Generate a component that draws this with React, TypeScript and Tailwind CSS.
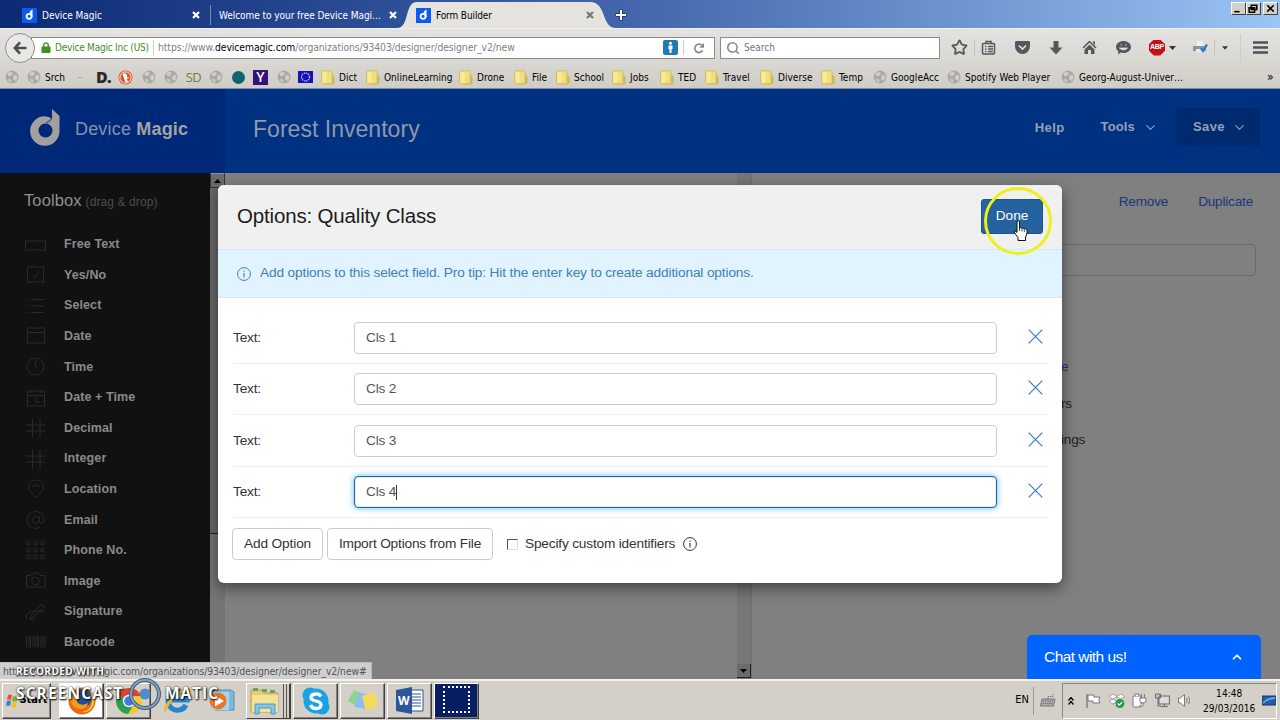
import type { ReactNode } from "react";
import { ChevronDown, ChevronUp, Search, Star } from "lucide-react";

const bookmarks = [
  { icon: "globe", label: "", w: "w-[22px]" },
  { icon: "globe", label: "Srch", w: "w-[47px]" },
  { icon: "dash", label: "", w: "w-[23px]" },
  { icon: "d", label: "", w: "w-[22px]" },
  { icon: "duck", label: "", w: "w-[23px]" },
  { icon: "globe", label: "", w: "w-[22px]" },
  { icon: "globe", label: "", w: "w-[23px]" },
  { icon: "sd", label: "", w: "w-[22px]" },
  { icon: "globe", label: "", w: "w-[23px]" },
  { icon: "teal", label: "", w: "w-[22px]" },
  { icon: "y", label: "", w: "w-[23px]" },
  { icon: "globe", label: "", w: "w-[22px]" },
  { icon: "eu", label: "", w: "w-[22px]" },
  { icon: "folder", label: "Dict", w: "w-[45px]" },
  { icon: "folder", label: "OnlineLearning", w: "w-[93px]" },
  { icon: "folder", label: "Drone", w: "w-[55px]" },
  { icon: "folder", label: "File", w: "w-[42px]" },
  { icon: "folder", label: "School", w: "w-[56px]" },
  { icon: "folder", label: "Jobs", w: "w-[48px]" },
  { icon: "folder", label: "TED", w: "w-[45px]" },
  { icon: "folder", label: "Travel", w: "w-[55px]" },
  { icon: "folder", label: "Diverse", w: "w-[61px]" },
  { icon: "folder", label: "Temp", w: "w-[52px]" },
  { icon: "globe", label: "GoogleAcc", w: "w-[74px]" },
  { icon: "globe", label: "Spotify Web Player", w: "w-[114px]" },
  { icon: "globe", label: "Georg-August-Univer…", w: "w-[203px]" },
];

const tools = [
  "Free Text", "Yes/No", "Select", "Date", "Time", "Date + Time", "Decimal",
  "Integer", "Location", "Email", "Phone No.", "Image", "Signature", "Barcode",
];

const options = ["Cls 1", "Cls 2", "Cls 3", "Cls 4"];

function Favicon() {
  return (
    <svg className="size-[15px] shrink-0" viewBox="0 0 15 15">
      <rect width="15" height="15" fill="#0a5cf0" />
      <circle cx="7.1" cy="8.3" r="2.5" fill="none" stroke="#fff" strokeWidth="1.8" />
      <path d="M9.7 9V3L8 4.6" fill="none" stroke="#fff" strokeWidth="1.6" />
    </svg>
  );
}

function BookmarkIcon({ name }: { name: string }) {
  switch (name) {
    case "globe":
      return (
        <svg className="size-[14px]" viewBox="0 0 14 14">
          <circle cx="7" cy="7" r="6.4" fill="#a9a8a5" />
          <path d="M2 3.5 5 1.5 8 3 6.5 5.5 4 6.5ZM8.5 5.5l3-1 1 3.5-2 3-2.5-2ZM3 8.5l3 1 .5 3.5L3.5 11Z" fill="#cfcdc9" />
        </svg>
      );
    case "folder":
      return (
        <svg className="size-[15px]" viewBox="0 0 15 15">
          <path d="M11 5.5l2.3.6c.6.2.7.7.7 1.2v5.2c0 .8-.6 1.3-1.3 1.3H6Z" fill="#d9c45a" stroke="#b9a03e" strokeWidth=".6" />
          <path d="M1.5 1.8c0-.6.3-1 .9-1H11c.6 0 1 .4 1 1v11c0 .6-.4 1-1 1H2.4c-.6 0-.9-.4-.9-1Z" fill="#f0e07c" stroke="#c8b257" strokeWidth=".7" />
          <path d="M2.6 2h4v11h-4Z" fill="#faf0a4" opacity=".7" />
        </svg>
      );
    case "dash":
      return <span className="h-px w-[5px] bg-[#c9a08c]" />;
    case "d":
      return <span className="font-['Open_Sans'] text-[16px] leading-none font-extrabold tracking-[-0.7px] text-[#2b2b2b] [font-stretch:normal]">D.</span>;
    case "duck":
      return (
        <svg className="size-[15px] shrink-0" viewBox="0 0 15 15">
          <circle cx="7.5" cy="7.5" r="7" fill="#d9562e" />
          <circle cx="7.5" cy="7.5" r="5.6" fill="none" stroke="#fff" strokeWidth=".9" />
          <path d="M4.5 4c2-1.5 4.5-.5 4.6 2L9 7l2 .8-2.2.9 1.2 3.5H7.5L5.5 7Z" fill="#fff" />
          <path d="M8.7 7.3l3.3.4-2.8 1.4Z" fill="#f5b82e" />
        </svg>
      );
    case "sd":
      return <span className="font-['Open_Sans'] text-[13px] leading-none font-medium tracking-[-0.5px] text-[#747e3c] [font-stretch:normal]">SD</span>;
    case "teal":
      return <span className="size-[13px] shrink-0 rounded-full bg-[#0e6470]" />;
    case "y":
      return <span className="flex size-[15px] items-center justify-center bg-[#38107c] font-['Open_Sans'] text-[14px] leading-none font-semibold text-white [font-stretch:normal]">Y</span>;
    default:
      return (
        <svg className="h-[12px] w-[15px]" viewBox="0 0 15 12">
          <rect width="15" height="12" fill="#1212c4" />
          <circle cx="7.5" cy="6" r="4" fill="none" stroke="#c8cfa0" strokeWidth="1.3" strokeDasharray="1.3 .8" />
        </svg>
      );
  }
}

function ToolIcon({ name }: { name: string }) {
  const shapes: Record<string, ReactNode> = {
    "Free Text": <rect x=".5" y="6.5" width="20" height="9" />,
    "Yes/No": <><rect x="2.5" y="2.5" width="16" height="15" /><path d="m7 11 2.5 2.5L15 6" /></>,
    Select: <path d="M2 4h1.5M6 4h13M2 10.5h1.5M6 10.5h13M2 17h1.5M6 17h13" />,
    Date: <><rect x="2.5" y="2.5" width="17" height="15" /><path d="M2.5 7h17" /></>,
    Time: <><circle cx="10.5" cy="10" r="8.5" /><path d="M10.5 4.5V10l3 2" /></>,
    "Date + Time": <><rect x="2.5" y="3.5" width="17" height="15" /><path d="M2.5 8h17M6 3v3M15.5 3v3M11 10.5v4h4" /></>,
    Decimal: <path d="M7.5 1v19M15 1v19M1 7.5h19M1 13.5h19" />,
    Integer: <path d="M7.5 1v19M15 1v19M1 7.5h19M1 13.5h19" />,
    Location: <path d="M11 18.5C7 15 3.5 12 3.5 8.5a7.5 7 0 0 1 15 0C18.5 12 15 15 11 18.5ZM7 8.5q4-4 8 0" />,
    Email: <><circle cx="11" cy="10.5" r="3.5" /><path d="M14.5 7v4.5c0 3 4.5 3 4.5-1a8.500 8.500 0 1 0-4 7.2" /></>,
    "Phone No.": <>{[3.5, 10.5, 17.5].map((y) => [3.5, 10.5, 17.5].map((x) => <circle key={x + "-" + y} cx={x} cy={y} r="1.9" />))}</>,
    Image: <><path d="M1.5 5H6l2-2.5h5.5L15 5h5v11.5H1.5Z" /><circle cx="10.5" cy="10.5" r="3.8" /></>,
    Signature: <><path d="m6 14 10.500-11 3 2.500L9 15.500l-4 1.500ZM2 18c-3-5 3-9 9-8M5 18q3 1 5-2M12 9.500h8" /></>,
    Barcode: <path d="M1.5 4v12M4 4v12M5.5 4v12M8 4v12M10 4v12M12 4v12M13.5 4v12M16 4v12M18 4v12M20 4v12" />,
  };
  return (
    <svg className="size-[22px]" viewBox="0 0 22 21" fill="none" stroke="#2a2a2a" strokeWidth="1">
      {shapes[name]}
    </svg>
  );
}

function InfoIcon({ className }: { className: string }) {
  return (
    <svg className={className} viewBox="0 0 14 14" fill="none" stroke="currentColor">
      <circle cx="7" cy="7" r="6.4" strokeWidth="1" />
      <path d="M7 6v4.5M7 3.5v1.2" strokeWidth="1.1" />
    </svg>
  );
}

function TabX({ color }: { color: string }) {
  return (
    <svg className="size-2" viewBox="0 0 8 8" stroke={color} strokeWidth="2.2"><path d="m1 1 6 6M7 1 1 7" /></svg>
  );
}

function BrowserChrome() {
  return (
    <div className="h-[89px] font-['DejaVu_Sans_Condensed','DejaVu_Sans',sans-serif] text-[10px] [font-stretch:semi-condensed]">
      <div className="relative flex h-7 bg-linear-to-r from-[#0c2a74] via-[#4467ad] to-[#9cc4f4] text-white">
        <div className="flex w-[210px] items-center pt-0.5 pl-[22px]">
          <Favicon />
          <span className="ml-[5px] w-[150px] tracking-[-0.02px]">Device Magic</span>
          <TabX color="#fff" />
        </div>
        <div className="flex w-[192px] items-center pt-0.5">
          <span className="h-5 w-px bg-white/40" />
          <span className="ml-2 w-[170px] whitespace-nowrap tracking-[-0.05px]">Welcome to your free Device Magi…</span>
          <TabX color="#fff" />
        </div>
        <div className="relative flex w-[212px] items-center pt-0.5 pl-[14px] text-black">
          <svg className="absolute top-0 left-[-7px] h-7 w-[226px]" viewBox="0 0 226 28">
            <path d="M2 28C15 28 9 2 22 2H195C212 2 206 28 221 28Z" fill="#e4e3e0" />
          </svg>
          <span className="relative flex items-center">
            <Favicon />
            <span className="ml-[5px] w-[150px] whitespace-nowrap tracking-[-0.12px]">Form Builder</span>
            <TabX color="#777" />
          </span>
        </div>
        <svg className="relative mt-[9px] ml-px size-3" viewBox="0 0 12 12">
          <path d="M6 .5v11M.5 6h11" stroke="#1c356f" strokeWidth="3.6" />
          <path d="M6 1v10M1 6h10" stroke="#fff" strokeWidth="2" />
        </svg>
        <div className="mt-[2px] mr-[2px] ml-auto flex h-3">
          {["M2 8h5", "M4 2h5v4H4ZM2 4.5h5v4H2Z", "m3 2 6 6M9 2 3 8"].map((d, i) => (
            <span key={d} className={`h-[13px] w-[15px] border border-t-white border-l-white border-r-[#404040] border-b-[#404040] bg-[#d4d0c8] ${i === 2 ? "ml-[2px]" : ""}`}>
              <svg viewBox="0 0 12 10" fill="none" stroke="#000" strokeWidth="1.4"><path d={d} /></svg>
            </span>
          ))}
        </div>
      </div>

      <div className="h-[60px] border-t border-[#f0efec] bg-linear-to-b from-[#e4e3e0] to-[#d0cdc6]">
        <div className="flex h-[37px] items-center">
          <div className="z-10 ml-[5px] flex size-[30px] shrink-0 items-center justify-center rounded-full border border-[#909090] bg-[#e9e8e5]">
            <svg className="size-[14px]" viewBox="0 0 15 15" fill="none" stroke="#494e57" strokeWidth="2.8"><path d="M7.5 1.5 2 7.5l5.5 6M2.5 7.5h12" /></svg>
          </div>
          <div className="-ml-1 flex h-[22px] w-[684px] shrink-0 items-center border border-[#8c8c8c] bg-white">
            <svg className="ml-[9px] h-[11px] w-[10px] shrink-0" viewBox="0 0 10 12"><path d="M2.5 6V3.5a2.5 2.5 0 0 1 5 0V6" fill="none" stroke="#429121" strokeWidth="1.5" /><rect y="5" width="10" height="7" rx="1" fill="#429121" /></svg>
            <span className="ml-[4px] w-[94px] shrink-0 whitespace-nowrap tracking-[-0.22px] text-[#429121]">Device Magic Inc (US)</span>
            <span className="mr-[4px] ml-[4px] h-[15px] w-px bg-[#d0d0d0]" />
            <span className="w-[505px] shrink-0 whitespace-nowrap text-[10.3px] tracking-[-0.08px] text-[#808080]">https://www.<span className="text-black">devicemagic.com</span>/organizations/93403/designer/designer_v2/new</span>
            <svg className="size-[15px] shrink-0" viewBox="0 0 15 15"><rect width="15" height="15" rx="2" fill="#2479b5" /><circle cx="7.5" cy="3.3" r="1.5" fill="#fff" /><path d="M5.5 5.5h4V9h-1v4h-2V9h-1Z" fill="#fff" /></svg>
            <span className="ml-[5px] h-[15px] w-px bg-[#ccc]" />
            <svg className="ml-[9px] size-3" viewBox="0 0 12 12"><path d="M9.6 8.5a4.2 4.2 0 1 1-.5-5" fill="none" stroke="#8a8a8a" strokeWidth="1.7" /><path d="M11 .8v5H6.3Z" fill="#8a8a8a" /></svg>
          </div>
          <div className="ml-[5px] flex h-[22px] w-[220px] shrink-0 items-center border border-[#8c8c8c] bg-white pl-[5px]">
            <Search className="size-[14px] text-[#888]" strokeWidth={2.6} />
            <span className="ml-[4px] text-[#757575]">Search</span>
          </div>
          <Star className="ml-[11px] size-[17px] text-[#53575e]" strokeWidth={2.5} />
          <span className="ml-[6px] h-4 w-px bg-[#c6c4bf]" />
          <svg className="ml-[6px] size-[15px]" viewBox="0 0 15 15" fill="none" stroke="#53575e" strokeWidth="1.5"><rect x="1.5" y="3.5" width="12" height="10.5" rx="1" /><path d="M5 3V1.5h5V3M4 6.5h1.5M7 6.5h5M4 9h1.5M7 9h5M4 11.5h1.5M7 11.5h5" /></svg>
          <svg className="ml-[19px] h-[13px] w-[15px]" viewBox="0 0 15 13"><path d="M0 1.5C0 .5.5 0 1.5 0h12c1 0 1.5.5 1.5 1.5V5.500a7.500 7.500 0 0 1-15 0Z" fill="#53575e" /><path d="m4 4.5 3.5 3.5L11 4.5" fill="none" stroke="#e2e1de" strokeWidth="1.7" /></svg>
          <svg className="ml-[19px] size-[14px]" viewBox="0 0 14 14"><path d="M4.5 0h5v6.5h4L7 13.5.5 6.5h4Z" fill="#53575e" /></svg>
          <svg className="ml-[19px] size-[15px]" viewBox="0 0 15 15"><path d="M7.5 1.5 1 8M7.5 1.5 14 8" stroke="#53575e" strokeWidth="1.6" /><path d="M7.5 4.5 12.5 9.5V14H9V10H6v4H2.5V9.5ZM11 1.5h2V5l-2-2Z" fill="#53575e" /></svg>
          <svg className="ml-[19px] size-[15px]" viewBox="0 0 15 15"><path d="M7.5 1C11.5 1 15 3.5 15 7s-3.5 6-7.5 6c-1 0-2-.1-2.8-.4L2 14.5l.3-3.2C1 10.2 0 8.7 0 7c0-3.5 3.5-6 7.5-6Z" fill="#53575e" /><path d="M4.5 5h1.5M9 5h1.5M3.5 8h8q-4 4-8 0Z" stroke="#e2e1de" fill="#e2e1de" strokeWidth=".8" /></svg>
          <span className="ml-[18px] flex size-4 items-center justify-center bg-[#c90d12] font-['Liberation_Sans'] text-[7px] font-bold tracking-[-0.2px] text-white [clip-path:polygon(30%_0,70%_0,100%_30%,100%_70%,70%_100%,30%_100%,0_70%,0_30%)]">ABP</span>
          <svg className="ml-[4px] h-1 w-[7px]" viewBox="0 0 7 4"><path d="M0 0h7L3.5 4Z" fill="#333" /></svg>
          <svg className="ml-[17px] size-[15px]" viewBox="0 0 15 15"><path d="M4 1h6v5H4Z" fill="#eef2f5" /><path d="M0 6h13v5H0Z" fill="#8d949b" /><path d="M3 9h7v4H3Z" fill="#dfe9f0" /><path d="m7 9 3 4 5-8-2-1-3 5-1.5-1.5Z" fill="#2d76c4" /></svg>
          <span className="ml-[6px] h-4 w-px bg-[#c6c4bf]" />
          <svg className="ml-[7px] h-1 w-[6px]" viewBox="0 0 7 4"><path d="M0 0h7L3.5 4Z" fill="#333" /></svg>
          <span className="ml-[12px] h-7 w-px bg-[#cfcdc8]" />
          <svg className="ml-[12px] h-[13px] w-[15px]" viewBox="0 0 15 13" stroke="#4d5158" strokeWidth="2.6"><path d="M0 1.5h15M0 6.5h15M0 11.5h15" /></svg>
        </div>
        <div className="flex h-[22px] items-center pl-[4px]">
          {bookmarks.map((b, i) => (
            <div key={i} className={`flex shrink-0 items-center ${b.w}`}>
              <span className="flex w-[15px] shrink-0 items-center justify-center"><BookmarkIcon name={b.icon} /></span>
              <span className="ml-[4px] whitespace-nowrap tracking-[0.04px]">{b.label}</span>
            </div>
          ))}
          <span className="ml-[4px] text-xs leading-none">»</span>
        </div>
      </div>
      <div className="h-px bg-[#7f8fa8]" />
    </div>
  );
}

function Designer() {
  return (
    <div className="flex h-[590px] flex-col bg-[#808080]">
      <header className="flex h-[84px] shrink-0 bg-[#003080]">
        <div className="flex w-[225px] items-center bg-[#002878] pb-[8px] pl-[30px] text-[#a3a3a3]">
          <svg className="h-[37px] w-[30px]" viewBox="0 0 30 37">
            <path fillRule="evenodd" d="M22 0 29.5 7V22A14.700 14.700 0 1 1 14.700 7.300Q19 7.500 22 10ZM15.500 14.500a7 7 0 1 0 7 7 7 7 0 0 0-7-7Z" fill="#a0a0a0" />
            <path d="M22 9.5Q19 12.5 16 14.5" fill="none" stroke="#4c5a80" strokeWidth="1.4" />
          </svg>
          <span className="mt-[4px] ml-[15px] font-['Liberation_Sans',sans-serif] text-[18px] tracking-[0.18px] whitespace-nowrap"><span className="text-[#8590ac]">Device </span><b>Magic</b></span>
        </div>
        <h1 className="mt-[26px] ml-7 h-7 text-[23px] leading-7 tracking-[0.03px] text-[#8f99ad]">Forest Inventory</h1>
        <div className="mr-[20px] ml-auto flex items-center pb-[8px] text-[13px] font-bold tracking-[0.4px] text-[#95a0b5]">
          <span className="mr-[36px] pt-[2px]">Help</span>
          <span className="mr-[8px] tracking-[0.15px]">Tools</span>
          <ChevronDown className="size-[15px]" strokeWidth={1.7} />
          <span className="ml-[18px] flex h-[38px] w-[84px] items-center rounded-[3px] bg-[#002a70] pl-[17px]">
            Save
            <ChevronDown className="ml-[7px] size-[15px]" strokeWidth={1.7} />
          </span>
        </div>
      </header>

      <div className="flex min-h-0 grow">
        <aside className="w-[210px] overflow-hidden bg-[#111] text-[#8a8a8a]">
          <h2 className="mt-[16px] mb-[17.4px] ml-6 flex h-[23px] items-center text-[16.5px] tracking-[0.1px] text-[#8f8f8f]">
            Toolbox<span className="ml-[4px] pt-[2px] text-[12px] text-[#4d4d4d]">(drag &amp; drop)</span>
          </h2>
          {tools.map((t) => (
            <div key={t} className="flex h-[30.58px] items-center pl-[25px] text-[12.5px] font-bold tracking-[0.1px]">
              <ToolIcon name={t} />
              <span className="ml-[17px]">{t}</span>
            </div>
          ))}
        </aside>
        <div className="flex w-[15px] flex-col bg-[#747474]">
          <span className="flex h-[15px] items-center justify-center border border-[#333] border-t-[#909090] bg-[#6c6c6c] text-[#111]">
            <svg className="h-1 w-[7px]" viewBox="0 0 7 4"><path d="M0 4h7L3.5 0Z" /></svg>
          </span>
          <span className="h-[346px] border-b border-[#222] bg-[#686868]" />
        </div>
        <div className="w-[512px]" />
        <div className="flex w-[15px] flex-col justify-end border-r border-[#707070] bg-[#767676]">
          <span className="mb-[1px] flex h-[14px] items-center justify-center border-r border-b border-[#222] bg-[#6c6c6c]">
            <svg className="h-1 w-[7px]" viewBox="0 0 7 4"><path d="M0 0h7L3.5 4Z" /></svg>
          </span>
        </div>
        <div className="grow pt-[20px] pr-6 text-[13.6px] tracking-[-0.2px] text-[#212121]">
          <div className="flex justify-end gap-[30px] pr-[3px] leading-[17px] text-[#1b377f]">
            <span>Remove</span><span>Duplicate</span>
          </div>
          <div className="mt-[34px] h-8 rounded border border-[#666b70]" />
          <div className="ml-[309px] leading-[18px]">
            <p className="mt-[82px] text-[#25317b]">e</p>
            <p className="mt-[19px]">rs</p>
            <p className="mt-[18px]">ings</p>
          </div>
        </div>
      </div>
    </div>
  );
}

function OptionsModal() {
  return (
    <div className="absolute top-[185px] left-[218px] h-[398px] w-[844px] overflow-hidden rounded-md bg-white text-[13.7px] tracking-[-0.19px] text-[#333] shadow-[0_5px_15px_rgba(0,0,0,0.5)]">
      <div className="flex h-[64px] items-center justify-between bg-[#f1f0f0] pr-[19px] pb-[2px] pl-[19px]">
        <h3 className="text-[20.5px] tracking-[-0.17px] text-[#1c1c1c]">Options: Quality Class</h3>
        <button className="h-[35px] w-[62px] rounded-[3px] border border-[#1d558c] bg-[#2463a0] tracking-[-0.1px] text-white">Done</button>
      </div>
      <div className="flex h-[49px] items-center border-y border-[#d4e9f6] bg-[#e1f3fe] pl-[19px] text-[13.7px] tracking-[-0.145px] text-[#4280b4]">
        <InfoIcon className="size-[14px]" />
        <span className="ml-[9px]">Add options to this select field. Pro tip: Hit the enter key to create additional options.</span>
      </div>
      <div className="mt-[14px] ml-[15px] w-[815px]">
        {options.map((o, i) => (
          <div key={o} className="flex h-[51.5px] items-center border-b border-[#eee] pt-px">
            <span className="w-[121px] pt-px">Text:</span>
            <div className={i === 3
              ? "flex h-8 w-[643px] items-center rounded border border-[#1f66a0] pt-px pl-[11px] text-[#555] shadow-[0_0_6px_#58b8f5,inset_0_0_1px_#2a70a8]"
              : "flex h-8 w-[643px] items-center rounded border border-[#ccc] pt-px pl-[11px] text-[#555]"}>
              {o}
              {i === 3 && <span className="h-[15px] w-px bg-[#333]" />}
            </div>
            <svg className="mb-[3px] ml-[31px] size-[15px]" viewBox="0 0 15 15" stroke="#3b7bc4" strokeWidth="1.2"><path d="m.7.7 13.6 13.6M14.3.7.7 14.3" /></svg>
          </div>
        ))}
        <div className="mt-[10px] flex items-center">
          <button className="-ml-px h-8 w-[91px] rounded border border-[#ccc] tracking-[-0.13px]">Add Option</button>
          <button className="ml-[4px] h-8 w-[166px] rounded border border-[#ccc]">Import Options from File</button>
          <span className="ml-[14px] size-[11px] border border-t-[#555] border-r-[#ddd] border-b-[#ddd] border-l-[#555]" />
          <span className="ml-[7px]">Specify custom identifiers</span>
          <InfoIcon className="ml-[8px] size-[14px]" />
        </div>
      </div>
    </div>
  );
}

function TaskButton({ className = "", children }: { className?: string; children: ReactNode }) {
  return (
    <span className={`flex h-[36px] w-[45px] shrink-0 items-center justify-center border border-t-white border-l-white border-r-[#404040] border-b-[#404040] shadow-[inset_-1px_-1px_0_#808080] ${className}`}>
      {children}
    </span>
  );
}

function Taskbar() {
  return (
    <div className="flex h-[41px] items-center border-t-2 border-[#f3f2ef] bg-[#d4d0c8] font-['DejaVu_Sans_Condensed','DejaVu_Sans',sans-serif] [font-stretch:semi-condensed]">
      <TaskButton className="ml-[2px] w-[49px]!">
        <svg className="size-[14px] shrink-0" viewBox="0 0 14 14"><path d="M3 1q2-1 4 0L6 6q-2-1-4 0Z" fill="#e4572e" /><path d="M8 2q2 1 5 0l-1 5q-3 1-5 0Z" fill="#7bb32e" /><path d="M2 7q2-1 4 0l-1 5q-2-1-4 0Z" fill="#2f83d6" /><path d="M7 8q2 1 5 0l-1 5q-3 1-5 0Z" fill="#f4bd26" /></svg>
        <b className="text-[11px] text-black">Start</b>
      </TaskButton>
      <TaskButton className="ml-2 bg-white">
        <svg className="size-[30px]" viewBox="0 0 30 30"><circle cx="15" cy="15" r="13.5" fill="#e66a17" /><circle cx="16" cy="12" r="9" fill="#234f91" /><path d="M2 8q3 2 6 1 5 0 5 4-4 0-3 3 4 5 11 1-1 6-8 6Q3 22 2 8Z" fill="#f29b1d" /><path d="M24 5q6 9 1 17-4 5-10 4 9-2 10-10Z" fill="#f7c72c" /></svg>
      </TaskButton>
      <TaskButton className="ml-[2px]">
        <svg className="size-[28px]" viewBox="0 0 28 28"><circle cx="14" cy="14" r="13" fill="#f3c72f" /><path d="M14 14 2.700 7.500A13 13 0 0 1 26 9H14Z" fill="#dd4334" /><path d="M14 14 2.700 7.500A13 13 0 0 0 13 27l6-10Z" fill="#2f9e50" /><circle cx="14" cy="14" r="6.2" fill="#fff" /><circle cx="14" cy="14" r="4.8" fill="#3d7de8" /></svg>
      </TaskButton>
      <svg className="ml-[11px] size-[30px]" viewBox="0 0 30 30"><path d="M24 19a9.500 9.500 0 1 1 1-5H8" fill="none" stroke="#2586cf" strokeWidth="5" /><path d="M3 27C-3 20 22-3 28 3q2 2-2 7 1-5-3-4Q12 8 3 27Z" fill="#f0b92f" /></svg>
      <svg className="ml-[16px] size-[27px]" viewBox="0 0 27 27"><path d="M5 3h18l3 2v18H7Z" fill="#7db9d8" stroke="#4d91b8" /><path d="M3 5h18v18H3Z" fill="#a9d3e8" /><circle cx="10" cy="14" r="8.5" fill="#ea7624" /><path d="m7 8.5 9 5.5-9 5.5Z" fill="#fff" /></svg>
      <TaskButton className="ml-[11px] border-r-2! shadow-[inset_-2px_0_0_#d4d0c8,inset_-3px_0_0_#555,inset_-5px_0_0_#d4d0c8,inset_-6px_0_0_#555]!">
        <svg className="mr-[6px] size-[30px]" viewBox="0 0 30 30"><path d="M1 4h11l2 3h14v19H1Z" fill="#eacb6a" stroke="#c3a14a" /><path d="M3 2h5v3H3ZM12 3h5v3h-5ZM20 4h5v3h-5Z" fill="#64a565" /><path d="M2 9h26v17H2Z" fill="#f6e39b" /><path d="M5 28V18h20v10h-4v-6H9v6Z" fill="#83c6e6" stroke="#4d9ac0" /></svg>
      </TaskButton>
      <TaskButton className="ml-[2px]">
        <svg className="size-[30px]" viewBox="0 0 30 30"><circle cx="15" cy="15" r="12.5" fill="#18a4e0" /><circle cx="9" cy="9" r="7.5" fill="#18a4e0" /><circle cx="21" cy="21" r="7.5" fill="#18a4e0" /><path d="M20 10.5Q18 7.5 14.5 8 10 8.5 10 11.5 10 14 15 15q5 1 5 4 0 3.5-5 3.5-4 0-5.5-3.5" fill="none" stroke="#fff" strokeWidth="3.3" /></svg>
      </TaskButton>
      <TaskButton className="ml-[2px]">
        <svg className="h-[26px] w-[32px]" viewBox="0 0 32 26"><path d="m7 2 9 4-6 12-9-5Z" fill="#8fd28a" /><path d="m12 4 10 3-3 14-12-2Z" fill="#8dbde8" /><path d="m15 8 12-4 4 13-12 6Z" fill="#f6da5e" /></svg>
      </TaskButton>
      <TaskButton className="ml-[2px]">
        <span className="relative flex h-[27px] w-[29px] items-center">
          <svg className="absolute inset-0 size-full" viewBox="0 0 29 27"><path d="M15 3h13v21H15Z" fill="#fff" stroke="#2b579a" /><path d="M17 7h9M17 10h9M17 13h9M17 16h9M17 19h9" stroke="#2b579a" /><path d="M1 3 17 0v27L1 24Z" fill="#2b579a" /></svg>
          <b className="relative ml-[3px] font-['Open_Sans'] text-[12px] text-white [font-stretch:normal]">W</b>
        </span>
      </TaskButton>
      <TaskButton className="ml-[2px] bg-[#081e64]">
        <span className="mb-[2px] h-[27px] w-[27px] border-2 border-dotted border-white" />
      </TaskButton>

      <span className="ml-auto text-[11px] text-black">EN</span>
      <span className="ml-[4px] h-7 w-px bg-[#999]" />
      <svg className="ml-[6px] h-[13px] w-[16px]" viewBox="0 0 16 13"><path d="M2 5h13l-1.5 7H.5Z" fill="#aaa" stroke="#777" /><path d="M3 7h10M2.5 9.5h10M8 5V2.5h5V0" stroke="#777" strokeDasharray="1.5 .7" fill="none" /></svg>
      <div className="mr-[3px] ml-[6px] flex h-[36px] w-[215px] shrink-0 items-center border border-[#888] border-r-white border-b-white pl-[5px]">
        <svg className="h-[8px] w-[6px]" viewBox="0 0 6 8" fill="none" stroke="#000" strokeWidth="1.3"><path d="m.5 3.5 2.5-3 2.5 3M.5 7.5l2.5-3 2.5 3" /></svg>
        <svg className="ml-[12px] size-[15px]" viewBox="0 0 15 15"><path d="M1 1v14" stroke="#555" /><path d="M2 2h6v2h6q-2 3 0 6H7V8H2Z" fill="#fff" stroke="#777" /></svg>
        <svg className="ml-[8px] size-[16px]" viewBox="0 0 16 16"><path d="m4 1 4 2.5L4 6 0 3.5ZM12 1l4 2.5L12 6 8 3.5ZM4 6l4 2.5L4 11 0 8.5ZM8 9l4 2-4 3-4-3Z" fill="#fff" stroke="#888" strokeWidth=".7" /><circle cx="11" cy="10.5" r="4.5" fill="#249c45" /><path d="m8.7 10.5 1.7 1.7 2.8-3.2" fill="none" stroke="#fff" strokeWidth="1.2" /></svg>
        <svg className="ml-[7px] size-[15px]" viewBox="0 0 15 15" fill="#fff" stroke="#777"><rect x="1" y="3" width="8" height="11" rx="1" /><path d="M3 3V1h4v2M8 5h6v3q0 2-3 2t-3-2ZM9.5 1v4M12.5 1v4M11 10v3H7" /></svg>
        <svg className="ml-[8px] size-[15px]" viewBox="0 0 15 15" fill="#ddd" stroke="#666"><rect x="4" y="3" width="10.5" height="8" /><path d="M6 13.5h7M9.5 11v2M.5 1h5v4h-5ZM3 5v8h3" fill="none" /></svg>
        <svg className="ml-[8px] h-[13px] w-[13px]" viewBox="0 0 13 13" fill="#fff" stroke="#777"><path d="M.5 4h2l4-3.5v12l-4-3.5h-2Z" /><path d="M8.5 4q1.5 2.5 0 5M10.5 2.5q3 4 0 8" fill="none" /></svg>
        <div className="ml-[12px] w-[54px] text-center text-[10px] leading-[15px] tracking-[0.05px] text-black"><div>14:48</div><div>29/03/2016</div></div>
        <svg className="ml-[6px] h-[12px] w-[14px] shrink-0" viewBox="0 0 14 12"><rect width="14" height="9" y="1" fill="#235ca7" stroke="#123a70" /><path d="M1 7q5-5 12-5v2Q6 4 1 9Z" fill="#68a9e4" /></svg>
      </div>
    </div>
  );
}

export default function App() {
  return (
    <div className="relative h-[720px] w-[1280px] overflow-hidden font-['Liberation_Sans',Arial,sans-serif]">
      <BrowserChrome />
      <Designer />
      <OptionsModal />
      <Taskbar />

      <div className="absolute top-[635px] left-[1027px] flex h-[44px] w-[234px] items-center justify-between rounded-t-[5px] bg-[#0062ff] pr-[17px] pl-[17px] text-[15.5px] tracking-[-0.55px] text-white">
        Chat with us!
        <ChevronUp className="size-[14px]" strokeWidth={3} />
      </div>

      <div className="absolute top-[662px] left-0 flex h-[17px] w-[372px] items-center border-t border-r border-[#bbb] bg-[#cfcfcf] pt-px pl-[3px] font-['DejaVu_Sans_Condensed','DejaVu_Sans',sans-serif] text-[10.3px] tracking-[-0.09px] whitespace-nowrap text-[#555] [font-stretch:semi-condensed]">
        https://www.devicemagic.com/organizations/93403/designer/designer_v2/new#
      </div>

      {/* recorder watermark */}
      <div className="absolute top-[664px] left-[16px] font-['Open_Sans',sans-serif] font-bold text-white [text-shadow:1px_1px_2px_#000,0_0_2px_#333]">
        <div className="h-[14px] text-[10px] leading-[15px] tracking-[0.45px]">RECORDED WITH</div>
        <div className="flex h-[31px] items-center text-[15.5px] whitespace-nowrap">
          <span className="w-[112px] tracking-[1.1px]">SCREENCAST</span>
          <svg className="size-[34px]" viewBox="0 0 34 34"><circle cx="17" cy="17" r="14" fill="none" stroke="#4a5a6c" strokeWidth="4" /><circle cx="17" cy="17" r="14" fill="none" stroke="#7ca3c8" strokeWidth="2" /><circle cx="17" cy="17" r="5.5" fill="#4f8cc9" /></svg>
          <span className="ml-[3px] tracking-[0.9px]">MATIC</span>
        </div>
      </div>

      {/* click highlight and pointer */}
      <div className="absolute top-[187px] left-[984px] size-[68px] rounded-full border-[3px] border-[#eef01c]" />
      <svg className="absolute top-[220px] left-[1013px] h-[22px] w-[16px]" viewBox="0 0 16 22">
        <path d="M4 1.5q1.5-1.5 2.5 0V8q1.5-1 2.3.3 1.4-.8 2.2.5 1.6-.6 2.5.9.9 1 .5 3.3-.3 2-1.5 4v3.5H5V17.5Q2 14 .8 11.5q.7-1.5 3.2.8Z" fill="#fff" stroke="#111" />
        <path d="M6.5 8v3M9 9v2.5M11.3 9.500V12" stroke="#111" strokeWidth=".8" />
      </svg>
    </div>
  );
}
